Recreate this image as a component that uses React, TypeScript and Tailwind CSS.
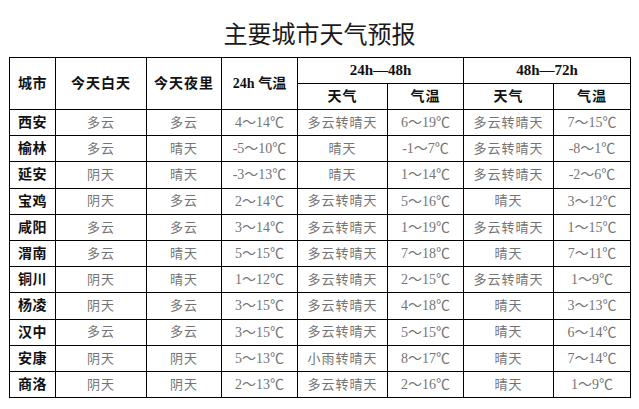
import React from "react";

const rows: string[][] = [
  ["西安", "多云", "多云", "4～14℃", "多云转晴天", "6～19℃", "多云转晴天", "7～15℃"],
  ["榆林", "多云", "晴天", "-5～10℃", "晴天", "-1～7℃", "多云转晴天", "-8～1℃"],
  ["延安", "阴天", "晴天", "-3～13℃", "晴天", "1～14℃", "多云转晴天", "-2～6℃"],
  ["宝鸡", "阴天", "多云", "2～14℃", "多云转晴天", "5～16℃", "晴天", "3～12℃"],
  ["咸阳", "多云", "多云", "3～14℃", "多云转晴天", "1～19℃", "多云转晴天", "1～15℃"],
  ["渭南", "多云", "晴天", "5～15℃", "多云转晴天", "7～18℃", "晴天", "7～11℃"],
  ["铜川", "阴天", "晴天", "1～12℃", "多云转晴天", "2～15℃", "多云转晴天", "1～9℃"],
  ["杨凌", "阴天", "多云", "3～15℃", "多云转晴天", "4～18℃", "晴天", "3～13℃"],
  ["汉中", "多云", "多云", "3～15℃", "多云转晴天", "5～15℃", "晴天", "6～14℃"],
  ["安康", "阴天", "阴天", "5～13℃", "小雨转晴天", "8～17℃", "晴天", "7～14℃"],
  ["商洛", "阴天", "阴天", "2～13℃", "多云转晴天", "2～16℃", "晴天", "1～9℃"],
];

const serif = "font-['Liberation_Serif','Noto_Sans_CJK_SC',serif]";

export default function App() {
  return (
    <div className="w-[639px] h-[409px] bg-white overflow-hidden">
      <div className="h-[57px] pt-[19px] text-center text-[24px] leading-[28px] text-[#1a1a1a] font-['Noto_Sans_CJK_SC',sans-serif]">
        主要城市天气预报
      </div>
      <table className={`ml-[9px] w-[621px] table-fixed border-collapse border border-black ${serif}`}>
        <colgroup>
          <col className="w-[46px]" />
          <col className="w-[91px]" />
          <col className="w-[75px]" />
          <col className="w-[76px]" />
          <col className="w-[90px]" />
          <col className="w-[76px]" />
          <col className="w-[90px]" />
          <col className="w-[77px]" />
        </colgroup>
        <thead>
          <tr className="h-[26px] text-[14px] font-bold text-[#111]">
            <th rowSpan={2} className="border border-black p-0 tracking-[0.5px]">城市</th>
            <th rowSpan={2} className="border border-black p-0 tracking-[1px]">今天白天</th>
            <th rowSpan={2} className="border border-black p-0 tracking-[1px]">今天夜里</th>
            <th rowSpan={2} className="border border-black p-0">24h 气温</th>
            <th colSpan={2} className="border border-black p-0 text-[15px]">24h—48h</th>
            <th colSpan={2} className="border border-black p-0 text-[15px]">48h—72h</th>
          </tr>
          <tr className="h-[26px] text-[14px] font-bold text-[#111]">
            <th className="border border-black p-0 tracking-[1px]">天气</th>
            <th className="border border-black p-0 tracking-[1px]">气温</th>
            <th className="border border-black p-0 tracking-[1px]">天气</th>
            <th className="border border-black p-0 tracking-[1px]">气温</th>
          </tr>
        </thead>
        <tbody>
          {rows.map((r) => (
            <tr key={r[0]} className="h-[26.2px]">
              {r.map((c, i) =>
                i === 0 ? (
                  <td key={i} className="border border-black p-0 text-center text-[14px] font-bold text-[#111] tracking-[0.5px]">
                    {c}
                  </td>
                ) : i === 3 || i === 5 || i === 7 ? (
                  <td key={i} className="border border-black p-0 text-center text-[14px] text-[#747474]">
                    {c}
                  </td>
                ) : (
                  <td key={i} className="border border-black p-0 text-center text-[13px] text-[#747474] tracking-[1px]">
                    {c}
                  </td>
                )
              )}
            </tr>
          ))}
        </tbody>
      </table>
    </div>
  );
}
